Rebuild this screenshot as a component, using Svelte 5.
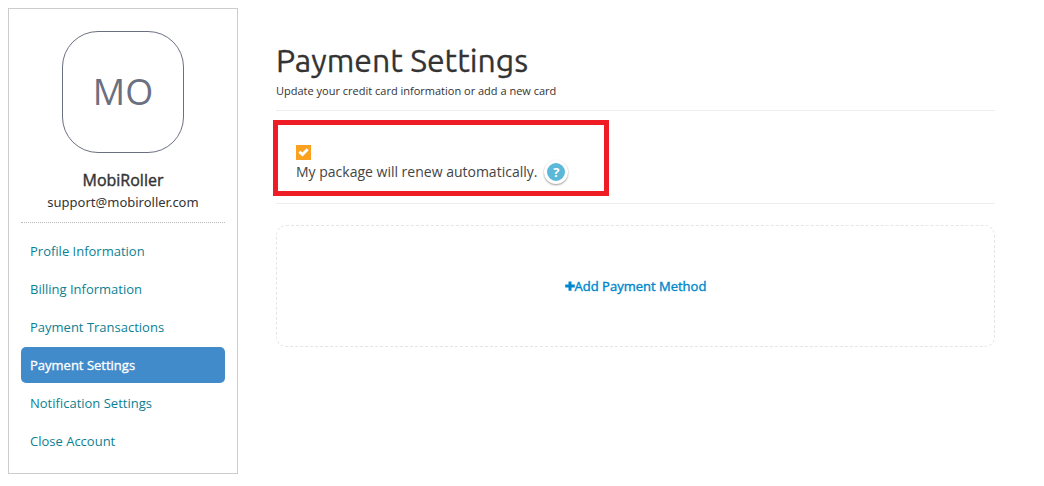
<script>
  const items = [
    'Profile Information',
    'Billing Information',
    'Payment Transactions',
    'Payment Settings',
    'Notification Settings',
    'Close Account'
  ];
  let active = $state('Payment Settings');
  let renew = $state(true);

  function select(event, item) {
    event.preventDefault();
    active = item;
  }
</script>

<div class="page">
  <aside>
    <div class="avatar">MO</div>
    <div class="name">MobiRoller</div>
    <div class="email">support@mobiroller.com</div>
    <nav>
      {#each items as item}
        <a href="#account" class:active={active === item} onclick={(e) => select(e, item)}>{item}</a>
      {/each}
    </nav>
  </aside>

  <main>
    <header>
      <h1>Payment Settings</h1>
      <p>Update your credit card information or add a new card</p>
    </header>

    <section class="renewal">
      <div class="highlight">
        <span class="check">
          <input id="renew" type="checkbox" bind:checked={renew} />
          {#if renew}
            <svg viewBox="0 0 15 15" aria-hidden="true">
              <path d="M2.4 7.8 L4.4 5.7 L6.4 7.6 L10.6 3.3 L12.7 5.3 L6.5 11.5 Z" fill="#fff" />
            </svg>
          {/if}
        </span>
        <div class="line">
          <label for="renew">My package will renew automatically.</label>
          <button class="help" type="button" aria-label="Help">?</button>
        </div>
      </div>
    </section>

    <section class="methods">
      <button class="add" type="button">
        <svg viewBox="0 0 10 10" aria-hidden="true">
          <path d="M3.5 0.5 H6.5 V3.5 H9.8 V6.5 H6.5 V9.8 H3.5 V6.5 H0.2 V3.5 H3.5 Z" fill="currentColor" />
        </svg>
        <span>Add Payment Method</span>
      </button>
    </section>
  </main>
</div>

<style>
  :global(body) {
    background: #fff;
  }

  .page,
  .page * {
    box-sizing: border-box;
  }

  .page {
    display: flex;
    align-items: flex-start;
    gap: 38px;
    padding: 8px 49px 12px 8px;
    font-family: 'Open Sans', 'Noto Sans', sans-serif;
    font-size: 13px;
    line-height: 20px;
    color: #333;
  }

  aside {
    flex: 0 0 230px;
    padding: 22px 12px 14px;
    border: 1px solid #ccc;
    text-align: center;
  }

  .avatar {
    display: flex;
    align-items: center;
    justify-content: center;
    width: 122px;
    height: 122px;
    margin: 0 auto;
    border: 1px solid #6b7080;
    border-radius: 36px;
    font-size: 36px;
    color: #6b7080;
  }

  .name {
    margin-top: 15px;
    font-size: 16px;
    line-height: 24px;
    -webkit-text-stroke: 0.4px currentColor;
  }

  .email {
    font-family: 'Noto Sans', sans-serif;
  }

  nav {
    display: flex;
    flex-direction: column;
    gap: 2px;
    margin-top: 10px;
    padding-top: 10px;
    border-top: 1px dotted #bbb;
    text-align: left;
  }

  nav a {
    padding: 8px 9px;
    border-radius: 5px;
    color: #0c7f93;
    text-decoration: none;
  }

  nav a.active {
    background: #428bca;
    color: #fff;
    -webkit-text-stroke: 0.3px currentColor;
  }

  main {
    flex: 1;
    min-width: 0;
    padding-top: 32px;
  }

  header {
    padding-bottom: 9px;
    border-bottom: 1px solid #eee;
  }

  h1 {
    margin: 0;
    font-family: Ubuntu, 'Open Sans', sans-serif;
    font-size: 32px;
    font-weight: 400;
    line-height: 41px;
    -webkit-text-stroke: 0.3px currentColor;
  }

  p {
    margin: 0;
    font-size: 11px;
    line-height: 20px;
  }

  .renewal {
    padding: 9px 0 7px;
    border-bottom: 1px solid #eee;
  }

  .highlight {
    width: 336px;
    max-width: 100%;
    margin-left: -3px;
    padding: 20px 18px 7px;
    border: 5px solid #ee1c25;
  }

  .check {
    display: grid;
    width: 15px;
    height: 15px;
  }

  .check input,
  .check svg {
    grid-area: 1 / 1;
    width: 15px;
    height: 15px;
    margin: 0;
  }

  .check input {
    appearance: none;
    border: 1px solid #faa21f;
  }

  .check input:checked {
    background: #faa21f;
  }

  .check svg {
    pointer-events: none;
  }

  .line {
    display: flex;
    align-items: center;
    gap: 7px;
    font-size: 14px;
    line-height: 24px;
    color: #444;
  }

  .help {
    width: 24px;
    height: 24px;
    padding: 0;
    border: 3px solid #fff;
    border-radius: 50%;
    background: #5bb8d9;
    box-shadow: 0 1px 2px #999;
    font-family: inherit;
    font-size: 13px;
    font-weight: 700;
    line-height: 18px;
    color: #fff;
  }

  .methods {
    display: flex;
    justify-content: center;
    margin-top: 21px;
    padding: 50px 20px;
    border: 1px dashed #e5e5e5;
    border-radius: 10px;
  }

  .add {
    display: flex;
    align-items: center;
    padding: 0;
    border: 0;
    background: none;
    font-family: inherit;
    font-size: 13px;
    line-height: 20px;
    color: #0088cc;
    -webkit-text-stroke: 0.4px currentColor;
  }

  .add svg {
    width: 10px;
    height: 10px;
  }
</style>
